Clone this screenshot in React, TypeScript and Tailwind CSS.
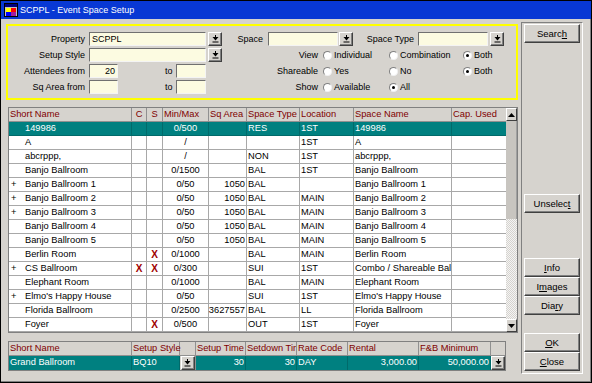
import React from "react";

type Row = {
  plus?: boolean;
  name: string;
  c?: boolean;
  s?: boolean;
  mm: string;
  sq?: string;
  type?: string;
  loc?: string;
  sname: string;
  sel?: boolean;
};

const rows: Row[] = [
  { name: "149986", mm: "0/500", type: "RES", loc: "1ST", sname: "149986", sel: true },
  { name: "A", mm: "/", loc: "1ST", sname: "A" },
  { name: "abcrppp,", mm: "/", type: "NON", loc: "1ST", sname: "abcrppp," },
  { name: "Banjo Ballroom", mm: "0/1500", type: "BAL", loc: "1ST", sname: "Banjo Ballroom" },
  { plus: true, name: "Banjo Ballroom 1", mm: "0/50", sq: "1050", type: "BAL", sname: "Banjo Ballroom 1" },
  { plus: true, name: "Banjo Ballroom 2", mm: "0/50", sq: "1050", type: "BAL", loc: "MAIN", sname: "Banjo Ballroom 2" },
  { plus: true, name: "Banjo Ballroom 3", mm: "0/50", sq: "1050", type: "BAL", loc: "MAIN", sname: "Banjo Ballroom 3" },
  { name: "Banjo Ballroom 4", mm: "0/50", sq: "1050", type: "BAL", loc: "MAIN", sname: "Banjo Ballroom 4" },
  { name: "Banjo Ballroom 5", mm: "0/50", sq: "1050", type: "BAL", loc: "MAIN", sname: "Banjo Ballroom 5" },
  { name: "Berlin Room", s: true, mm: "0/1000", type: "BAL", loc: "MAIN", sname: "Berlin Room" },
  { plus: true, name: "CS Ballroom", c: true, s: true, mm: "0/300", type: "SUI", loc: "1ST", sname: "Combo / Shareable Ballroom" },
  { name: "Elephant Room", mm: "0/1000", type: "BAL", loc: "MAIN", sname: "Elephant Room" },
  { plus: true, name: "Elmo's Happy House", mm: "0/50", type: "SUI", loc: "1ST", sname: "Elmo's Happy House" },
  { name: "Florida Ballroom", mm: "0/2500", sq: "3627557", type: "BAL", loc: "LL", sname: "Florida Ballroom" },
  { name: "Foyer", s: true, mm: "0/500", type: "OUT", loc: "1ST", sname: "Foyer" },
];

const DropIcon = () => (
  <svg width="7" height="8" viewBox="0 0 7 8" className="block">
    <rect x="3" y="0" width="1" height="2" fill="#000" />
    <polygon points="0.5,2 6.5,2 3.5,5.5" fill="#000" />
    <rect x="0.5" y="6.5" width="6" height="1" fill="#000" />
  </svg>
);

const DropBtn = ({ className = "" }: { className?: string }) => (
  <div
    className={`w-[14px] h-[14px] shrink-0 flex items-center justify-center bg-[#d6d3ce] border border-t-white border-l-white border-r-[#404040] border-b-[#404040] shadow-[inset_-1px_-1px_0_#808080] ${className}`}
  >
    <DropIcon />
  </div>
);

const Input = ({ className = "", value = "", right = false }: { className?: string; value?: string; right?: boolean }) => (
  <div
    className={`h-[14px] shrink-0 flex items-center px-[2px] bg-[#fcfbe1] border border-t-[#707070] border-l-[#707070] border-b-[#f4f4f4] border-r-[#f4f4f4] ${right ? "justify-end" : ""} ${className}`}
  >
    {value}
  </div>
);

const Radio = ({ label, checked = false, className = "" }: { label: string; checked?: boolean; className?: string }) => (
  <div className={`flex items-center shrink-0 ${className}`}>
    <div className="w-[9px] h-[9px] rounded-full bg-white border border-t-[#808080] border-l-[#808080] border-b-[#f0f0f0] border-r-[#f0f0f0] flex items-center justify-center">
      {checked && <div className="w-[3px] h-[3px] rounded-full bg-black" />}
    </div>
    <span className="ml-[2px]">{label}</span>
  </div>
);

const Btn = ({ children, className = "" }: { children: React.ReactNode; className?: string }) => (
  <div
    className={`w-[56px] h-[19px] flex items-center justify-center bg-[#d6d3ce] border border-t-white border-l-white border-r-[#404040] border-b-[#404040] shadow-[inset_-1px_-1px_0_#808080] text-[9.5px] ${className}`}
  >
    {children}
  </div>
);

const Arrow = ({ up }: { up?: boolean }) => (
  <svg width="7" height="4" viewBox="0 0 7 4" className="block">
    <polygon points={up ? "0,4 7,4 3.5,0" : "0,0 7,0 3.5,4"} fill="#000" />
  </svg>
);

const X = () => <span className="font-bold text-[#a00000] text-[10px]">X</span>;

export default function App() {
  return (
    <div className="w-[592px] h-[383px] bg-[#d6d3ce] border border-black flex flex-col font-['Liberation_Sans',Arial,sans-serif] text-[9px] text-black leading-none overflow-hidden">
      {/* title bar */}
      <div className="h-[18px] shrink-0 bg-[#0838d4] flex items-center pl-[3px]">
        <svg width="14" height="14" viewBox="0 0 14 14" className="block">
          <rect x="0.5" y="0.5" width="13" height="13" fill="#c0c0c0" stroke="#000" />
          <rect x="1" y="1" width="12" height="3" fill="#000080" />
          <rect x="2" y="5" width="5" height="4" fill="#ffff00" />
          <rect x="7" y="5" width="5" height="4" fill="#ff0000" />
          <rect x="2" y="9" width="5" height="4" fill="#0000ff" />
          <rect x="7" y="9" width="5" height="4" fill="#a020a0" />
        </svg>
        <span className="ml-[2px] text-white text-[9px]">SCPPL - Event Space Setup</span>
      </div>

      <div className="flex flex-1 pt-[3px] pl-[5px] border-r border-b border-r-[#808080] border-b-[#808080]">
        {/* left column */}
        <div className="w-[512px] mt-[2px] flex flex-col">
          {/* filter panel */}
          <div className="h-[76px] border-2 border-[#ffff00] flex flex-col gap-[2px] pt-[6px]">
            <div className="flex h-[14px] items-center">
              <span className="w-[77px] text-right">Property</span>
              <Input className="ml-[4px] w-[117px]" value="SCPPL" />
              <DropBtn className="ml-[2px]" />
              <span className="w-[41px] text-right">Space</span>
              <Input className="ml-[5px] w-[70px]" />
              <DropBtn className="ml-[1px]" />
              <span className="w-[61px] text-right">Space Type</span>
              <Input className="ml-[4px] w-[70px]" />
              <DropBtn className="ml-[2px]" />
            </div>
            <div className="flex h-[14px] items-center">
              <span className="w-[77px] text-right">Setup Style</span>
              <Input className="ml-[4px] w-[117px]" />
              <DropBtn className="ml-[2px]" />
              <span className="w-[96px] text-right">View</span>
              <Radio className="ml-[5px] w-[66px]" label="Individual" />
              <Radio className="w-[74px]" label="Combination" />
              <Radio label="Both" checked />
            </div>
            <div className="flex h-[14px] items-center">
              <span className="w-[77px] text-right">Attendees from</span>
              <Input className="ml-[4px] w-[29px]" value="20" right />
              <span className="w-[58px] pl-[47px]">to</span>
              <Input className="w-[30px]" />
              <span className="w-[112px] text-right">Shareable</span>
              <Radio className="ml-[5px] w-[66px]" label="Yes" />
              <Radio className="w-[74px]" label="No" />
              <Radio label="Both" checked />
            </div>
            <div className="flex h-[14px] items-center">
              <span className="w-[77px] text-right">Sq Area from</span>
              <Input className="ml-[4px] w-[29px]" />
              <span className="w-[58px] pl-[47px]">to</span>
              <Input className="w-[30px]" />
              <span className="w-[112px] text-right">Show</span>
              <Radio className="ml-[5px] w-[66px]" label="Available" />
              <Radio label="All" checked />
            </div>
          </div>

          {/* main grid */}
          <div className="ml-[2px] mt-[7px] w-[510px] h-[226px] border border-[#808080] flex text-[9.3px]">
            <div className="w-[497px] flex flex-col">
              <div className="flex h-[14px] shrink-0 bg-[#d6d3ce] border-b border-[#909090] text-[#800000] whitespace-nowrap">
                <div className="w-[123px] pl-[1px] flex items-center border-r border-[#909090]">Short Name</div>
                <div className="w-[15px] flex items-center justify-center border-r border-[#909090]">C</div>
                <div className="w-[16px] flex items-center justify-center border-r border-[#909090]">S</div>
                <div className="w-[46px] pl-[1px] flex items-center border-r border-[#909090]">Min/Max</div>
                <div className="w-[38px] pl-[1px] flex items-center border-r border-[#909090]">Sq Area</div>
                <div className="w-[53px] pl-[1px] flex items-center border-r border-[#909090]">Space Type</div>
                <div className="w-[54px] pl-[1px] flex items-center border-r border-[#909090]">Location</div>
                <div className="w-[98px] pl-[1px] flex items-center border-r border-[#909090]">Space Name</div>
                <div className="w-[54px] pl-[1px] flex items-center">Cap. Used</div>
              </div>
              {rows.map((r, i) => {
                const line = r.sel ? "border-[#006a6a]" : "border-[#a8a8a8]";
                return (
                  <div
                    key={i}
                    className={`flex h-[14px] shrink-0 border-b whitespace-nowrap ${r.sel ? "bg-[#008080] text-white border-[#006a6a]" : "bg-white border-[#a8a8a8]"}`}
                  >
                    <div className={`w-[123px] flex items-center overflow-hidden border-r ${line}`}>
                      <span className="w-[16px] pl-[2px]">{r.plus ? "+" : ""}</span>
                      <span>{r.name}</span>
                    </div>
                    <div className={`w-[15px] flex items-center justify-center border-r ${line}`}>{r.c && <X />}</div>
                    <div className={`w-[16px] flex items-center justify-center border-r ${line}`}>{r.s && <X />}</div>
                    <div className={`w-[46px] flex items-center justify-center border-r ${line}`}>{r.mm}</div>
                    <div className={`w-[38px] flex items-center justify-end pr-[1px] border-r ${line}`}>{r.sq}</div>
                    <div className={`w-[53px] flex items-center pl-[1px] border-r ${line}`}>{r.type}</div>
                    <div className={`w-[54px] flex items-center pl-[1px] border-r ${line}`}>{r.loc}</div>
                    <div className={`w-[98px] flex items-center pl-[1px] overflow-hidden border-r ${line}`}>{r.sname}</div>
                    <div className="w-[54px]" />
                  </div>
                );
              })}
            </div>
            {/* scrollbar */}
            <div className="w-[11px] flex flex-col">
              <div className="h-[13px] flex items-center justify-center bg-[#d6d3ce] border border-t-white border-l-white border-r-[#404040] border-b-[#404040]">
                <Arrow up />
              </div>
              <div className="h-[98px] bg-[#c8c5c0] border-r border-[#a0a0a0]" />
              <div className="flex-1 bg-[image:repeating-conic-gradient(#d6d3ce_0_25%,#f4f4f4_0_50%)] bg-[length:2px_2px]" />
              <div className="h-[13px] flex items-center justify-center bg-[#d6d3ce] border border-t-white border-l-white border-r-[#404040] border-b-[#404040]">
                <Arrow />
              </div>
            </div>
          </div>

          {/* booking grid */}
          <div className="ml-[2px] mt-[8px] w-[498px] border border-[#808080] flex flex-col text-[9.3px] whitespace-nowrap">
            <div className="flex h-[14px] bg-[#d6d3ce] border-b border-[#909090] text-[#800000]">
              <div className="w-[123px] pl-[1px] flex items-center border-r border-[#909090]">Short Name</div>
              <div className="w-[48px] pl-[1px] flex items-center border-r border-[#909090]">Setup Style</div>
              <div className="w-[16px] border-r border-[#909090]" />
              <div className="w-[50px] pl-[1px] flex items-center border-r border-[#909090]">Setup Time</div>
              <div className="w-[51px] pl-[1px] flex items-center overflow-hidden border-r border-[#909090]">
                <span className="block w-[49px] overflow-hidden">Setdown Time</span>
              </div>
              <div className="w-[51px] pl-[1px] flex items-center border-r border-[#909090]">Rate Code</div>
              <div className="w-[71px] pl-[1px] flex items-center border-r border-[#909090]">Rental</div>
              <div className="w-[72px] pl-[1px] flex items-center border-r border-[#909090]">F&amp;B Minimum</div>
              <div className="w-[14px]" />
            </div>
            <div className="flex h-[14px] bg-[#008080] text-white">
              <div className="w-[123px] pl-[1px] flex items-center border-r border-[#006a6a]">Grand Ballroom</div>
              <div className="w-[48px] pl-[1px] flex items-center border-r border-[#006a6a]">BQ10</div>
              <div className="w-[16px] flex items-center justify-center bg-[#d6d3ce] border-r border-[#909090]">
                <DropBtn className="w-[14px] h-[13px]" />
              </div>
              <div className="w-[50px] pr-[1px] flex items-center justify-end border-r border-[#006a6a]">30</div>
              <div className="w-[51px] pr-[1px] flex items-center justify-end border-r border-[#006a6a]">30</div>
              <div className="w-[51px] pl-[1px] flex items-center border-r border-[#006a6a]">DAY</div>
              <div className="w-[71px] pr-[1px] flex items-center justify-end border-r border-[#006a6a]">3,000.00</div>
              <div className="w-[72px] pr-[1px] flex items-center justify-end border-r border-[#006a6a]">50,000.00</div>
              <div className="w-[14px] flex items-center justify-center bg-[#d6d3ce]">
                <DropBtn className="w-[14px] h-[13px]" />
              </div>
            </div>
          </div>
        </div>

        {/* right panel */}
        <div className="ml-[3px] w-[62px] h-[352px] border border-t-[#808080] border-l-[#808080] border-b-white border-r-white flex flex-col pt-[1px] pl-[2px]">
          <Btn>
            Searc<u>h</u>
          </Btn>
          <Btn className="mt-[151px]">
            Unselec<u>t</u>
          </Btn>
          <Btn className="mt-[45px]">
            <u>I</u>nfo
          </Btn>
          <Btn>
            I<u>m</u>ages
          </Btn>
          <Btn>
            Dia<u>r</u>y
          </Btn>
          <Btn className="mt-[18px]">
            <u>O</u>K
          </Btn>
          <Btn>
            <u>C</u>lose
          </Btn>
        </div>
      </div>
    </div>
  );
}
